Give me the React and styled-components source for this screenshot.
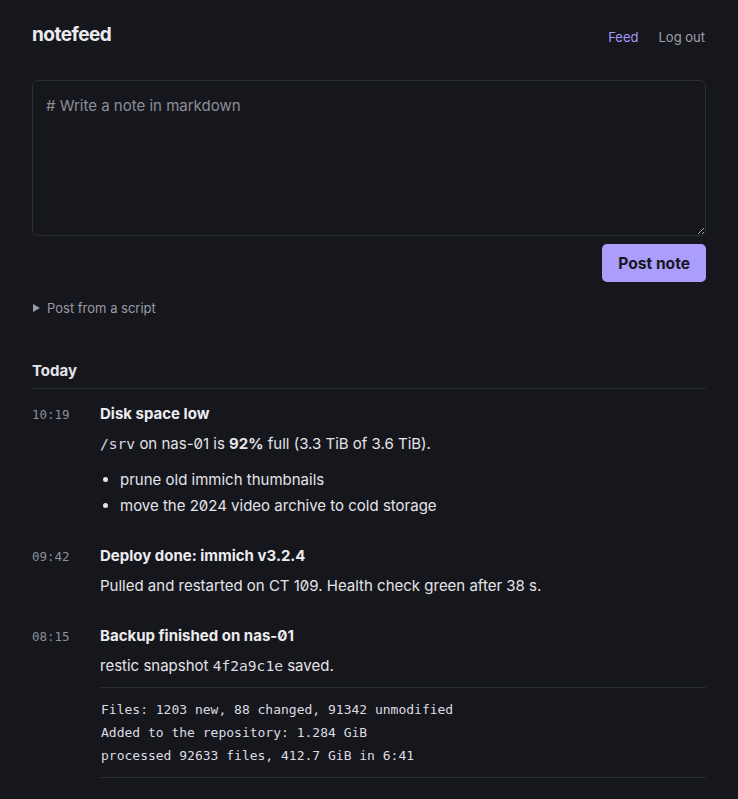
import React from "react";
import styled, { createGlobalStyle } from "styled-components";

const Global = createGlobalStyle`
  html, body { margin: 0; padding: 0; background: #16171c; }
  body {
    font-family: Inter, "Noto Sans", sans-serif;
    font-feature-settings: "zero" 1;
    color: #e4e4e9;
    font-size: 15px;
    line-height: 24px;
  }
  * { box-sizing: border-box; }
`;

const Page = styled.div`
  width: 674px;
  margin: 0 32px;
  padding: 23px 0 40px;
`;

const Header = styled.header`
  display: flex;
  align-items: center;
  justify-content: space-between;
  height: 24px;
  margin-bottom: 33px;
`;

const Brand = styled.div`
  font-size: 19px;
  font-weight: 700;
  letter-spacing: -0.5px;
  color: #ececf0;
`;

const Nav = styled.nav`
  display: flex;
  gap: 20px;
  padding-top: 4px;
  margin-right: 1px;
`;

const NavLink = styled.a`
  font-size: 13px;
  color: ${(p) => (p.$active ? "#a898f7" : "#a0a1ab")};
  text-decoration: none;
`;

const Composer = styled.form`
  display: flex;
  flex-direction: column;
  align-items: flex-end;
  gap: 8px;
`;

const TextArea = styled.textarea`
  width: 100%;
  height: 156px;
  display: block;
  background: #16171c;
  border: 1px solid #2c2e37;
  border-radius: 6px;
  padding: 13px 13px;
  font-family: Inter, "Noto Sans", sans-serif;
  font-size: 15px;
  line-height: 24px;
  color: #e4e4e9;
  resize: vertical;
  outline: none;
  &::placeholder { color: #8c8e99; }
`;

const PostButton = styled.button`
  height: 38px;
  padding: 0 16px;
  border: none;
  border-radius: 5px;
  background: #aa9dfc;
  color: #17171d;
  font-family: Inter, "Noto Sans", sans-serif;
  font-size: 15.6px;
  font-weight: 700;
  cursor: pointer;
`;

const Details = styled.details`
  margin-top: 15px;
  font-size: 13px;
  line-height: 22px;
  color: #9b9ca7;
`;

const Summary = styled.summary`
  list-style: none;
  display: flex;
  align-items: center;
  gap: 7px;
  cursor: pointer;
  &::-webkit-details-marker { display: none; }
  &::before {
    content: "";
    width: 0;
    height: 0;
    margin-left: 1px;
    border-style: solid;
    border-width: 4.5px 0 4.5px 7px;
    border-color: transparent transparent transparent #9b9ca7;
  }
`;

const Section = styled.section`
  margin-top: 40px;
`;

const DayHeading = styled.h2`
  margin: 0;
  font-size: 15px;
  line-height: 24px;
  font-weight: 700;
  padding-bottom: 5px;
  border-bottom: 1px solid #2a2c34;
`;

const Entries = styled.div`
  display: flex;
  flex-direction: column;
  gap: 26px;
  padding-top: 13px;
`;

const Entry = styled.article`
  display: grid;
  grid-template-columns: 68px 1fr;
  align-items: baseline;
`;

const Time = styled.time`
  font-family: "DejaVu Sans Mono", monospace;
  font-size: 12.5px;
  color: #8c8e99;
`;

const Body = styled.div`
  min-width: 0;
`;

const Title = styled.h3`
  margin: 0 0 6px;
  font-size: 15px;
  line-height: 24px;
  font-weight: 700;
  color: #ececf0;
`;

const Para = styled.p`
  margin: 0 0 12px;
  &:last-child { margin-bottom: 0; }
  code {
    font-family: "DejaVu Sans Mono", monospace;
    font-size: 14.6px;
    color: #dcdce2;
  }
  strong { font-weight: 700; }
`;

const List = styled.ul`
  margin: 0;
  padding-left: 20px;
  li { margin: 2px 0 0; }
  li:first-child { margin-top: 0; }
`;

const Pre = styled.pre`
  margin: -3px 0 0;
  padding: 10px 0 10px 1px;
  border-top: 1px solid #2a2c34;
  border-bottom: 1px solid #2a2c34;
  font-family: "DejaVu Sans Mono", monospace;
  font-size: 13px;
  line-height: 23px;
  color: #dcdce2;
  white-space: pre;
`;

export default function App() {
  return (
    <>
      <Global />
      <Page>
        <Header>
          <Brand>notefeed</Brand>
          <Nav>
            <NavLink href="#" $active>Feed</NavLink>
            <NavLink href="#">Log out</NavLink>
          </Nav>
        </Header>
        <Composer onSubmit={(e) => e.preventDefault()}>
          <TextArea placeholder="# Write a note in markdown" />
          <PostButton type="submit">Post note</PostButton>
        </Composer>
        <Details>
          <Summary>Post from a script</Summary>
        </Details>
        <Section>
          <DayHeading>Today</DayHeading>
          <Entries>
            <Entry>
              <Time>10:19</Time>
              <Body>
                <Title>Disk space low</Title>
                <Para>
                  <code>/srv</code> on nas-01 is <strong>92%</strong> full (3.3 TiB of 3.6 TiB).
                </Para>
                <List>
                  <li>prune old immich thumbnails</li>
                  <li>move the 2024 video archive to cold storage</li>
                </List>
              </Body>
            </Entry>
            <Entry>
              <Time>09:42</Time>
              <Body>
                <Title>Deploy done: immich v3.2.4</Title>
                <Para>Pulled and restarted on CT 109. Health check green after 38 s.</Para>
              </Body>
            </Entry>
            <Entry>
              <Time>08:15</Time>
              <Body>
                <Title>Backup finished on nas-01</Title>
                <Para>
                  restic snapshot <code>4f2a9c1e</code> saved.
                </Para>
                <Pre>{`Files: 1203 new, 88 changed, 91342 unmodified
Added to the repository: 1.284 GiB
processed 92633 files, 412.7 GiB in 6:41`}</Pre>
              </Body>
            </Entry>
          </Entries>
        </Section>
      </Page>
    </>
  );
}
